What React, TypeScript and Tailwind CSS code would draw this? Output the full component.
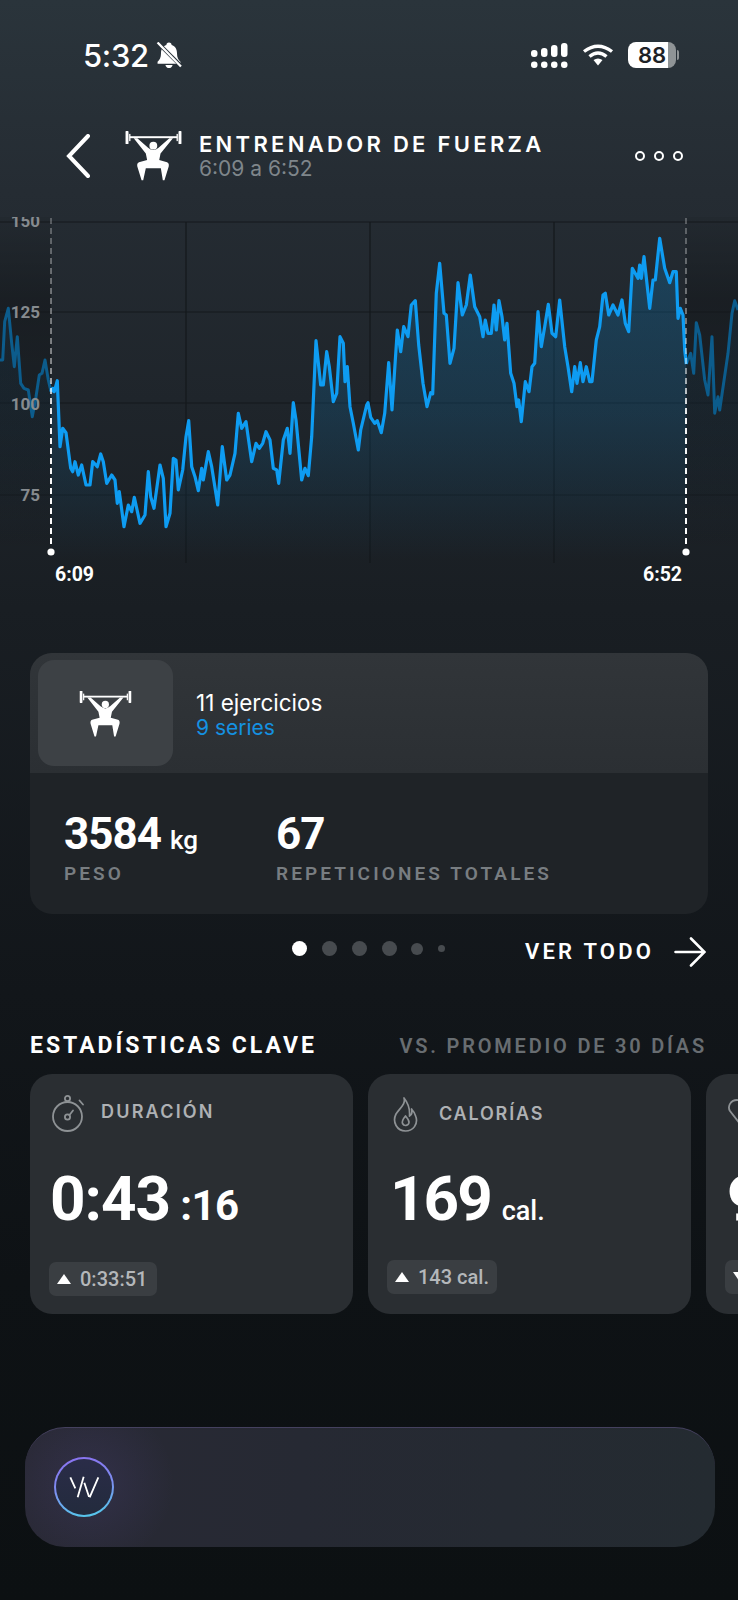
const leftTrace = [[0,450],[8,450],[14,335],[25,295],[35,400],[43,470],[52,380],[62,520],[72,535],[85,540],[97,620],[108,560],[118,495],[126,490],[135,450],[145,510],[153,545]];

const mainTraceA = [[153,545],[158,535],[163,545],[172,512],[180,710],[188,655],[198,668],[212,775],[218,785],[225,755],[235,795],[245,765],[258,825],[270,825],[278,755],[292,770],[302,732],[310,755],[320,820],[335,795],[345,810],[352,880],[358,845],[372,950],[385,885],[395,905],[403,862],[420,940],[435,915],[445,785],[452,860],[462,895],[480,765],[490,805],[498,950],[510,910],[520,745],[528,750],[535,840],[548,780],[558,680],[566,632],[575,770],[585,800],[595,842],[605,775],[610,810],[625,725],[635,770],[653,885],[667,710],[680,810],[690,795],[705,730],[715,610],[725,655],[738,635],[755,755],[768,700],[778,715],[788,700],[798,665],[810,690],[820,775],[830,780],[836,820],[850,690],[862,655],[870,730],[880,578],[888,630],[905,810],[915,775],[925,797],[935,680],[948,392],[962,525],[970,525],[980,425],[988,470],[1000,575],[1010,550],[1020,380],[1030,400],[1035,515],[1042,470],[1050,590],[1060,640],[1075,720],[1082,660],[1100,585]];

const mainTraceB = [[0,578],[8,622],[20,640],[28,632],[40,668],[50,610],[62,458],[72,600],[88,360],[98,425],[107,350],[120,380],[130,285],[142,272],[152,405],[165,520],[177,590],[188,548],[194,552],[205,250],[215,160],[228,310],[235,315],[246,460],[258,415],[270,218],[283,315],[295,285],[307,195],[320,290],[335,320],[345,380],[352,330],[360,370],[370,370],[378,285],[385,360],[393,272],[402,320],[410,390],[417,340],[428,490],[438,520],[447,590],[452,570],[460,635],[472,515],[483,545],[492,470],[500,460],[510,305],[520,410],[530,350],[541,283],[552,370],[563,380],[575,270],[590,410],[600,470],[611,545],[620,470],[627,520],[637,458],[645,515],[655,470],[665,515],[672,515],[685,390],[695,350],[705,255],[712,250],[722,315],[735,285],[750,315],[762,270],[772,340],[782,365],[793,175],[810,205],[815,165],[820,205],[828,140],[845,295],[855,210],[862,210],[875,85],[890,175],[905,218],[915,185],[925,185],[930,325],[937,295],[945,315],[950,420],[955,462]];

const rightTrace = [[955,462],[968,430],[977,490],[985,338],[995,375],[1010,510],[1020,555],[1032,380],[1040,610],[1050,560],[1055,600],[1080,430],[1092,310],[1100,272],[1110,300]];

// traced off the screenshot at 3x, so bring them back to page px
const toPx = (pts: number[][], ox: number) =>
  pts.map(([x, y]) => `${(ox + x / 3).toFixed(1)},${(210 + y / 3).toFixed(1)}`).join(" ");

const leftLine = toPx(leftTrace, 0);
const mainLine = toPx(mainTraceA, 0) + " " + toPx(mainTraceB, 368);
const rightLine = toPx(rightTrace, 368);

function Lifter({ className }: { className: string }) {
  return (
    <svg viewBox="45 28 175 156" className={className} fill="currentColor">
      <rect x="47" y="31" width="9" height="40" rx="2" />
      <rect x="209" y="31" width="9" height="40" rx="2" />
      <rect x="58" y="40" width="4" height="22" />
      <rect x="203" y="40" width="4" height="22" />
      <rect x="60" y="47" width="145" height="6" />
      <circle cx="132" cy="76" r="12" />
      <path d="M72 53 L83 53 L116 82 Q132 96 148 82 L181 53 L192 53 L154 100 L150 120 L174 127 Q181 130 179 140 L166 182 L161 182 L155 145 L109 145 L101 182 L96 182 L83 140 Q81 130 88 127 L113 120 L109 100 Z" />
    </svg>
  );
}

function StatusBar() {
  return (
    <div className="flex items-center justify-between h-[26px] mt-[42px] pl-[83px] pr-[62px]">
      <div className="flex items-center gap-[7px]">
        <span className="text-[31px] leading-none text-white font-medium font-['Inter',sans-serif] tracking-[-0.3px]">5:32</span>
        <svg viewBox="0 0 25 25" className="w-[26px] h-[26px]" fill="white">
          <path d="M12.5 0.5 C14.2 0.5 15 1.6 15 3 C18.6 4 20.2 7 20.2 11 C20.2 15 21.5 17 23.5 19 L23.5 21 L1.5 21 L1.5 19 C3.5 17 4.8 15 4.8 11 C4.8 7 6.4 4 10 3 C10 1.6 10.8 0.5 12.5 0.5 Z" />
          <path d="M9 22 H16 C15.5 24 14.2 25 12.5 25 C10.8 25 9.5 24 9 22 Z" />
          <line x1="2.5" y1="1.5" x2="25" y2="24" stroke="#29333a" strokeWidth="3.6" />
          <line x1="1.5" y1="0.5" x2="24" y2="23.5" stroke="white" strokeWidth="2.2" />
        </svg>
      </div>
      <div className="flex items-center">
        <svg viewBox="0 0 37 25" className="w-[37px] h-[25px]" fill="white">
          <rect x="0" y="7" width="6.5" height="7" rx="3" />
          <rect x="10" y="5" width="6.5" height="9" rx="3" />
          <rect x="20" y="2" width="6.5" height="12" rx="3" />
          <rect x="30" y="0" width="6.5" height="14" rx="3" />
          <rect x="0" y="18.5" width="6.5" height="6.5" rx="3" />
          <rect x="10" y="18.5" width="6.5" height="6.5" rx="3" />
          <rect x="20" y="18.5" width="6.5" height="6.5" rx="3" />
          <rect x="30" y="18.5" width="6.5" height="6.5" rx="3" />
        </svg>
        <svg viewBox="0 0 32 22" className="w-[32px] h-[22px] ml-[14px]" fill="none" stroke="white" strokeWidth="3.4">
          <path d="M2 7.5 Q16 -3 30 7.5" />
          <path d="M7.5 12.5 Q16 5.5 24.5 12.5" />
          <path d="M11.5 16 Q16 13 20.5 16 L16 21.5 Z" fill="white" stroke="none" />
        </svg>
        <div className="relative w-[48px] h-[26px] ml-[14px] rounded-[8px] bg-[linear-gradient(90deg,#ffffff_84%,#8f9496_84%)] flex items-center justify-center">
          <span className="text-[22px] leading-none font-semibold text-[#1d2226] font-['Inter',sans-serif]">88</span>
          <span className="absolute left-[49px] top-[8px] w-[2px] h-[10px] rounded-r-sm bg-[#8f9496]" />
        </div>
      </div>
    </div>
  );
}

function Header() {
  return (
    <div className="flex items-center h-[49px] mt-[63px] pl-[66px] pr-[55px]">
      <svg viewBox="0 0 24 44" className="w-[24px] h-[44px]" fill="none" stroke="white" strokeWidth="4" strokeLinecap="round">
        <path d="M22 2 L3 22 L22 42" />
      </svg>
      <Lifter className="w-[59px] h-[51px] ml-[34px] text-white" />
      <div className="ml-[16px] font-['Inter',sans-serif]">
        <div className="text-[22px] leading-[25px] font-semibold tracking-[3.3px] text-white whitespace-nowrap">ENTRENADOR DE FUERZA</div>
        <div className="text-[21px] leading-[23px] text-[#7f868b]">6:09 a 6:52</div>
      </div>
      <div className="flex ml-auto gap-[9px]">
        <span className="w-[10px] h-[10px] rounded-full border-2 border-white" />
        <span className="w-[10px] h-[10px] rounded-full border-2 border-white" />
        <span className="w-[10px] h-[10px] rounded-full border-2 border-white" />
      </div>
    </div>
  );
}

function Chart() {
  const gridY = [222, 312, 403, 495];
  const gridX = [186, 370, 554];
  return (
    <svg viewBox="0 217 738 373" className="block w-[738px] h-[373px] mt-[37px] font-['Roboto',sans-serif]">
      <defs>
        <linearGradient id="area" gradientUnits="userSpaceOnUse" x1="0" y1="240" x2="0" y2="560">
          <stop offset="0" stopColor="#0f6fa8" stopOpacity="0.36" />
          <stop offset="0.55" stopColor="#0f6fa8" stopOpacity="0.22" />
          <stop offset="1" stopColor="#0f6fa8" stopOpacity="0" />
        </linearGradient>
        <linearGradient id="areaDim" gradientUnits="userSpaceOnUse" x1="0" y1="300" x2="0" y2="540">
          <stop offset="0" stopColor="#0f6fa8" stopOpacity="0.1" />
          <stop offset="1" stopColor="#0f6fa8" stopOpacity="0" />
        </linearGradient>
        <linearGradient id="shade" gradientUnits="userSpaceOnUse" x1="0" y1="217" x2="0" y2="560">
          <stop offset="0" stopColor="#000" stopOpacity="0.05" />
          <stop offset="0.25" stopColor="#000" stopOpacity="0.25" />
          <stop offset="1" stopColor="#000" stopOpacity="0" />
        </linearGradient>
        <linearGradient id="dash" gradientUnits="userSpaceOnUse" x1="0" y1="218" x2="0" y2="548">
          <stop offset="0" stopColor="#fff" stopOpacity="0.25" />
          <stop offset="0.45" stopColor="#fff" stopOpacity="0.45" />
          <stop offset="0.6" stopColor="#fff" stopOpacity="0.95" />
          <stop offset="1" stopColor="#fff" />
        </linearGradient>
      </defs>

      <rect x="0" y="217" width="51" height="343" fill="url(#shade)" />
      <rect x="686" y="217" width="52" height="343" fill="url(#shade)" />

      {gridY.map((y) => (
        <line key={y} x1="0" x2="738" y1={y} y2={y} stroke="#14181c" strokeWidth="1.2" />
      ))}
      {gridX.map((x) => (
        <line key={x} x1={x} x2={x} y1="222" y2="563" stroke="#14181c" strokeWidth="1.2" />
      ))}

      <polygon points={`0,560 ${leftLine} 51,560`} fill="url(#areaDim)" />
      <polygon points={`686,560 ${rightLine} 738,560`} fill="url(#areaDim)" />
      <polyline points={leftLine} fill="none" stroke="#0c5c8c" strokeWidth="3" strokeLinejoin="round" />
      <polyline points={rightLine} fill="none" stroke="#0c5c8c" strokeWidth="3" strokeLinejoin="round" />

      <polygon points={`51,560 ${mainLine} 686,560`} fill="url(#area)" />
      <polyline points={mainLine} fill="none" stroke="#0e9cf2" strokeWidth="3.2" strokeLinejoin="round" />

      <line x1="51" x2="51" y1="218" y2="548" stroke="url(#dash)" strokeWidth="2" strokeDasharray="6 4" />
      <line x1="686" x2="686" y1="218" y2="548" stroke="url(#dash)" strokeWidth="2" strokeDasharray="6 4" />
      <circle cx="51" cy="552" r="3.6" fill="white" />
      <circle cx="686" cy="552" r="3.6" fill="white" />

      <g fill="#868b8f" fontSize="17" fontWeight="700" textAnchor="end">
        <text x="40" y="227">150</text>
        <text x="40" y="318">125</text>
        <text x="40" y="410">100</text>
        <text x="40" y="501">75</text>
      </g>
      <g fill="white" fontSize="19.5" fontWeight="700">
        <text x="55" y="581">6:09</text>
        <text x="643" y="581">6:52</text>
      </g>
    </svg>
  );
}

function WorkoutCard() {
  return (
    <div className="mt-[63px] mx-[30px] h-[261px] rounded-[22px] overflow-hidden bg-[#1f2327] font-['Roboto',sans-serif]">
      <div className="flex items-center h-[120px] pl-[8px] bg-[linear-gradient(180deg,#313539_0%,#2b2f33_100%)]">
        <div className="flex items-center justify-center w-[135px] h-[106px] rounded-[16px] bg-[#3d4145]">
          <Lifter className="w-[53px] h-[47px] text-white" />
        </div>
        <div className="mt-[3px] ml-[23px] font-['Inter',sans-serif]">
          <div className="text-[22.5px] leading-[26px] text-white">11 ejercicios</div>
          <div className="text-[21px] leading-[24px] text-[#1492e2]">9 series</div>
        </div>
      </div>
      <div className="flex pl-[34px] pt-[36px]">
        <div className="w-[212px]">
          <div className="flex items-baseline h-[50px] text-white">
            <span className="text-[44px] leading-[50px] font-bold tracking-[-1px]">3584</span>
            <span className="ml-[9px] text-[26px] leading-[50px] font-medium">kg</span>
          </div>
          <div className="mt-[3px] text-[19px] leading-[24px] font-semibold tracking-[3.1px] text-[#787d81]">PESO</div>
        </div>
        <div>
          <div className="h-[50px] text-[44px] leading-[50px] font-bold tracking-[-1px] text-white">67</div>
          <div className="mt-[3px] text-[19px] leading-[24px] font-semibold tracking-[3.1px] text-[#787d81]">REPETICIONES TOTALES</div>
        </div>
      </div>
    </div>
  );
}

function Pager() {
  return (
    <div className="flex items-center h-[29px] mt-[23px] pl-[292px] pr-[32px] font-['Roboto',sans-serif]">
      <div className="flex items-center w-[233px] -mt-[6px]">
        <span className="w-[15px] h-[15px] rounded-full bg-white" />
        <span className="w-[15px] h-[15px] ml-[15px] rounded-full bg-[#474b4f]" />
        <span className="w-[15px] h-[15px] ml-[15px] rounded-full bg-[#474b4f]" />
        <span className="w-[15px] h-[15px] ml-[15px] rounded-full bg-[#474b4f]" />
        <span className="w-[12px] h-[12px] ml-[14px] rounded-full bg-[#474b4f]" />
        <span className="w-[7px] h-[7px] ml-[15px] rounded-full bg-[#474b4f]" />
      </div>
      <span className="text-[22px] leading-none font-semibold tracking-[3.2px] text-white">VER TODO</span>
      <svg viewBox="0 0 32 30" className="w-[32px] h-[30px] ml-auto" fill="none" stroke="white" strokeWidth="2.6" strokeLinecap="round">
        <path d="M1.5 15 H30 M17 1.5 L30.5 15 L17 28.5" />
      </svg>
    </div>
  );
}

function Badge({ up, text, className }: { up: boolean; text: string; className: string }) {
  return (
    <div className={`flex items-center h-[34px] rounded-[7px] bg-[#3a3e42] pl-[8px] ${className}`}>
      <svg viewBox="0 0 14 10" className="w-[14px] h-[10px]" fill="white">
        <path d={up ? "M7 0 L14 10 H0 Z" : "M7 10 L14 0 H0 Z"} />
      </svg>
      <span className="ml-[9px] text-[20px] leading-none font-medium text-[#b4b7ba] whitespace-nowrap">{text}</span>
    </div>
  );
}

function KeyStats() {
  return (
    <div className="font-['Roboto',sans-serif]">
      <div className="flex items-center justify-between h-[20px] mt-[70px] pl-[30px] pr-[31px] whitespace-nowrap">
        <span className="text-[23px] font-bold tracking-[3px] text-white">ESTADÍSTICAS CLAVE</span>
        <span className="text-[20px] font-semibold tracking-[2.8px] text-[#686d71]">VS. PROMEDIO DE 30 DÍAS</span>
      </div>
      <div className="flex gap-[15px] mt-[18px] pl-[30px] overflow-hidden">
        <div className="shrink-0 w-[323px] h-[240px] rounded-[22px] bg-[#2a2e32] pl-[19px]">
          <div className="flex items-center h-[36px] mt-[21px] pl-[3px]">
            <svg viewBox="0 0 34 37" className="w-[34px] h-[37px]" fill="none" stroke="#8e9295" strokeWidth="1.8" strokeLinecap="round">
              <circle cx="15.5" cy="21.5" r="14.5" />
              <circle cx="15.5" cy="3.5" r="2.6" />
              <path d="M15.5 6.5 V7" />
              <circle cx="15.5" cy="22" r="2.6" />
              <path d="M17.5 20 L21 15.5" />
              <path d="M27.5 5.5 L31 9.5" />
            </svg>
            <span className="ml-[15px] -mt-[3px] text-[18px] leading-none font-semibold tracking-[2.2px] text-[#aeb1b4] font-['Inter',sans-serif]">DURACIÓN</span>
          </div>
          <div className="flex items-baseline h-[66px] mt-[35px] pl-[1px] text-white font-bold">
            <span className="text-[62px] leading-[66px] tracking-[-1px]">0:43</span>
            <span className="ml-[10px] text-[42px] leading-[66px] tracking-[-0.5px]">:16</span>
          </div>
          <Badge up text="0:33:51" className="w-[108px] mt-[30px]" />
        </div>

        <div className="shrink-0 w-[323px] h-[240px] rounded-[22px] bg-[#2a2e32] pl-[19px]">
          <div className="flex items-center h-[36px] mt-[22px] pl-[6px]">
            <svg viewBox="0 0 25 35" className="w-[25px] h-[35px]" fill="none" stroke="#8e9295" strokeWidth="1.7" strokeLinejoin="round">
              <path d="M11 1 C13 7 7 11 3 17 C-1 25 4 34 12.5 34 C20.5 34 25 27 23 20 C22 16 20 13.5 18.5 12 C19.5 16 18.5 18 16.5 19 C17 13 15 6 11 1 Z" />
              <path d="M12.5 19 C10 22 8.5 24 9.5 26.5 C11 29.5 15.5 29 16 25.5 C16.3 23 14 21 12.5 19 Z" />
            </svg>
            <span className="ml-[21px] text-[18px] leading-none font-semibold tracking-[1.8px] text-[#aeb1b4] font-['Inter',sans-serif]">CALORÍAS</span>
          </div>
          <div className="flex items-baseline h-[66px] mt-[34px] pl-[3px] text-white">
            <span className="text-[62px] leading-[66px] font-bold tracking-[-2px]">169</span>
            <span className="ml-[11px] text-[27px] leading-[66px] font-medium">cal.</span>
          </div>
          <Badge up text="143 cal." className="w-[110px] mt-[28px]" />
        </div>

        <div className="shrink-0 w-[323px] h-[240px] rounded-[22px] bg-[#2a2e32] pl-[19px]">
          <div className="flex items-center h-[36px] mt-[22px] pl-[2px]">
            <svg viewBox="0 0 34 34" className="w-[34px] h-[34px]" fill="none" stroke="#8e9295" strokeWidth="1.8">
              <path d="M17 32 L3 14 C0 9 4 3 10 3 C13 3 16 5 17 8 C18 5 21 3 24 3 C30 3 34 9 31 14 Z" />
            </svg>
          </div>
          <div className="h-[66px] mt-[34px] pl-[2px] text-[62px] leading-[66px] font-bold text-white">9</div>
          <Badge up={false} text="12" className="w-[110px] mt-[28px]" />
        </div>
      </div>
    </div>
  );
}

function CoachBar() {
  return (
    <div className="relative mt-[113px] ml-[25px] mr-[23px] h-[120px] rounded-[40px] overflow-hidden border-t border-[#45415f] bg-[linear-gradient(90deg,#292935_0%,#262933_40%,#242b31_100%)]">
      <div className="absolute left-[-20px] top-[-30px] w-[170px] h-[170px] rounded-full bg-[radial-gradient(circle,rgba(120,100,220,0.12)_0%,rgba(120,100,220,0)_70%)]" />
      <div className="relative mt-[29px] ml-[29px] w-[60px] h-[60px] rounded-full p-[2px] bg-[linear-gradient(170deg,#8b6ff0_0%,#7d8ff0_50%,#4fd0ea_100%)]">
        <div className="flex items-center justify-center w-full h-full rounded-full bg-[linear-gradient(180deg,#2a2c48_0%,#232b3d_100%)]">
          <svg viewBox="85 105 96 72" className="w-[32px] h-[24px]" fill="none" stroke="white" strokeWidth="5.5">
            <path d="M92 112 L107 145 M132 110 L114 172 M134 128 L148 170 M176 112 L150 172" />
          </svg>
        </div>
      </div>
    </div>
  );
}

export default function App() {
  return (
    <div className="flex flex-col w-[738px] h-[1600px] overflow-hidden bg-[linear-gradient(180deg,#2a343b_0%,#252c33_12%,#191e23_38%,#12161a_62%,#0e1215_80%,#0c1012_100%)]">
      <StatusBar />
      <Header />
      <Chart />
      <WorkoutCard />
      <Pager />
      <KeyStats />
      <CoachBar />
    </div>
  );
}
